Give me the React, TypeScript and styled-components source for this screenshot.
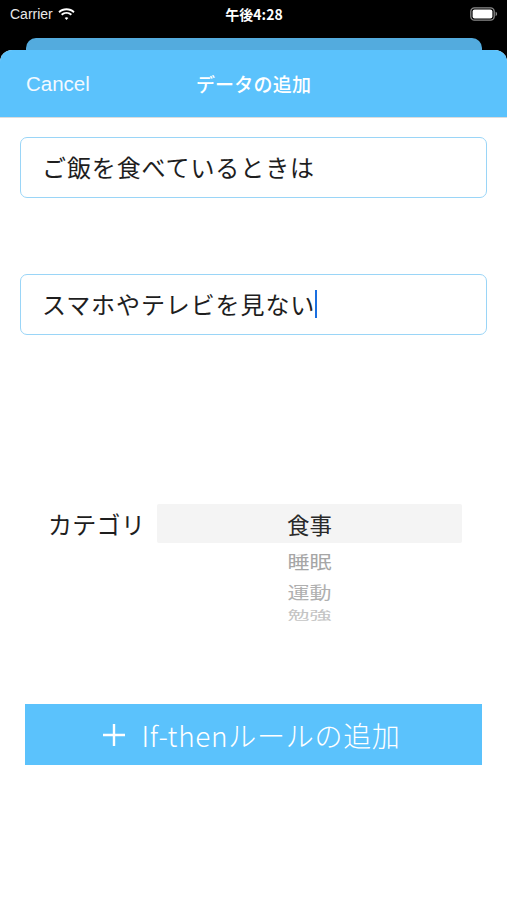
import React from 'react'
import styled, { createGlobalStyle } from 'styled-components'

const GlobalStyle = createGlobalStyle`
	html, body {
		margin: 0;
		padding: 0;
		background: #000;
	}
	body {
		font-family: "Noto Sans CJK JP", "Noto Sans", sans-serif;
	}
`

const blue = '#5bc2fc'

const Screen = styled.div`
	width: 507px;
	height: 900px;
	display: flex;
	flex-direction: column;
	background: #000;
	overflow: hidden;
`

const StatusBar = styled.div`
	height: 38px;
	display: grid;
	grid-template-columns: 1fr auto 1fr;
	align-items: start;
	padding: 0 9px 0 10px;
	color: #fff;
	font-family: "Liberation Sans", "Noto Sans CJK JP", sans-serif;
	font-size: 14px;
`

const StatusLeft = styled.div`
	display: flex;
	align-items: center;
	gap: 5px;
	height: 28px;
	color: #e8e8e8;
`

const StatusTime = styled.div`
	height: 28px;
	display: flex;
	align-items: center;
	font-weight: bold;
	font-family: "Noto Sans CJK JP", sans-serif;
`

const StatusRight = styled.div`
	height: 28px;
	display: flex;
	align-items: center;
	justify-content: flex-end;
`

const BackCard = styled.div`
	height: 12px;
	margin: 0 25px 0 26px;
	background: #53abde;
	border-radius: 10px 10px 0 0;
`

const Sheet = styled.div`
	flex: 1;
	display: flex;
	flex-direction: column;
	background: #fff;
	border-radius: 12px 12px 0 0;
	overflow: hidden;
`

const NavBar = styled.div`
	height: 68px;
	background: ${blue};
	display: grid;
	grid-template-columns: 1fr auto 1fr;
	align-items: center;
	padding: 0 26px;
	border-bottom: 1px solid #dcdcdc;
	box-sizing: border-box;
`

const CancelButton = styled.span`
	color: #f2f9ff;
	font-family: "Liberation Sans", sans-serif;
	font-size: 20.5px;
	padding-top: 1px;
`

const Title = styled.span`
	color: #fff;
	font-size: 19px;
	font-weight: 500;
	letter-spacing: 0.2px;
`

const Form = styled.div`
	display: flex;
	flex-direction: column;
	padding: 19px 20px 0 20px;
`

const Field = styled.div<{ $gap?: number }>`
	height: 61px;
	box-sizing: border-box;
	margin-top: ${(p) => p.$gap ?? 0}px;
	border: 1.5px solid #9ad5f7;
	border-radius: 7px;
	display: flex;
	align-items: center;
	padding: 0 0 2px 21px;
	color: #1e1e1e;
	font-size: 24px;
	letter-spacing: 0.9px;
`

const Caret = styled.span`
	display: inline-block;
	width: 2px;
	height: 28px;
	margin-left: 0;
	background: #1a6fe0;
`

const CategoryRow = styled.div`
	display: flex;
	align-items: flex-start;
	margin-top: 169px;
	padding-left: 28px;
`

const CategoryLabel = styled.div`
	width: 109px;
	height: 39px;
	display: flex;
	align-items: center;
	font-size: 24px;
	color: #1e1e1e;
	letter-spacing: 0.3px;
`

const Picker = styled.div`
	width: 305px;
	height: 118px;
	display: flex;
	flex-direction: column;
	overflow: hidden;
`

const PickerItem = styled.div<{ $h: number; $size: number; $color: string; $squash?: number; $bg?: string }>`
	height: ${(p) => p.$h}px;
	flex-shrink: 0;
	display: flex;
	align-items: center;
	justify-content: center;
	background: ${(p) => p.$bg || 'transparent'};
	border-radius: 2px;
	font-size: ${(p) => p.$size}px;
	color: ${(p) => p.$color};
	span {
		display: inline-block;
		transform: scaleY(${(p) => p.$squash ?? 1});
	}
`

const AddButton = styled.div`
	margin: 82px 5px 0 5px;
	height: 61px;
	background: ${blue};
	display: flex;
	align-items: center;
	justify-content: center;
	gap: 15px;
	color: #fff;
	font-size: 28px;
	padding-right: 4px;
	svg {
		margin-top: 1px;
	}
`

const ButtonLabel = styled.span`
	font-family: "Noto Sans CJK JP", sans-serif;
	font-weight: 300;
	letter-spacing: 0.7px;
`

const WifiIcon = () => (
	<svg width="17" height="13" viewBox="0 0 17 13">
		<path d="M8.5 2.2c2.6 0 5 1 6.8 2.7l1.3-1.4C14.5 1.5 11.6.3 8.5.3S2.5 1.5.4 3.5l1.3 1.4C3.5 3.2 5.9 2.2 8.5 2.2z" fill="#fff" />
		<path d="M8.5 5.8c1.6 0 3.1.6 4.2 1.6L14 6c-1.5-1.3-3.4-2.1-5.5-2.1S4.5 4.7 3 6l1.3 1.4c1.1-1 2.6-1.6 4.2-1.6z" fill="#fff" />
		<path d="M8.5 9.2c.7 0 1.3.3 1.8.7l-1.8 2.1-1.8-2.1c.5-.4 1.1-.7 1.8-.7z" fill="#fff" />
	</svg>
)

const BatteryIcon = () => (
	<svg width="28" height="14" viewBox="0 0 28 14">
		<rect x="0.8" y="0.8" width="23.4" height="12.4" rx="3.6" fill="none" stroke="#8a8a8a" strokeWidth="1.3" />
		<rect x="2.6" y="2.6" width="19.8" height="8.8" rx="2" fill="#fff" />
		<path d="M25.6 4.8v4.4c.9-.3 1.5-1.2 1.5-2.2s-.6-1.9-1.5-2.2z" fill="#8a8a8a" />
	</svg>
)

const PlusIcon = () => (
	<svg width="24" height="24" viewBox="0 0 24 24">
		<path d="M12 1v22M1 12h22" stroke="#fff" strokeWidth="2.4" />
	</svg>
)

const categories = [
	{ name: '食事', h: 39, size: 22.5, color: '#2a2a2a', bg: '#f4f4f4' },
	{ name: '睡眠', h: 34, size: 22, color: '#a6a6a6', squash: 0.85 },
	{ name: '運動', h: 28, size: 22, color: '#b0b0b0', squash: 0.75 },
	{ name: '勉強', h: 17, size: 22, color: '#c4c4c4', squash: 0.55 },
]

export default function App() {
	return (
		<>
			<GlobalStyle />
			<Screen>
				<StatusBar>
					<StatusLeft>
						Carrier
						<WifiIcon />
					</StatusLeft>
					<StatusTime>午後4:28</StatusTime>
					<StatusRight>
						<BatteryIcon />
					</StatusRight>
				</StatusBar>
				<BackCard />
				<Sheet>
					<NavBar>
						<CancelButton>Cancel</CancelButton>
						<Title>データの追加</Title>
						<span />
					</NavBar>
					<Form>
						<Field>ご飯を食べているときは</Field>
						<Field $gap={76}>
							スマホやテレビを見ない
							<Caret />
						</Field>
						<CategoryRow>
							<CategoryLabel>カテゴリ</CategoryLabel>
							<Picker>
								{categories.map((c) => (
									<PickerItem key={c.name} $h={c.h} $size={c.size} $color={c.color} $squash={c.squash} $bg={c.bg}>
										<span>{c.name}</span>
									</PickerItem>
								))}
							</Picker>
						</CategoryRow>
						<AddButton>
							<PlusIcon />
							<ButtonLabel>If-thenルールの追加</ButtonLabel>
						</AddButton>
					</Form>
				</Sheet>
			</Screen>
		</>
	)
}
